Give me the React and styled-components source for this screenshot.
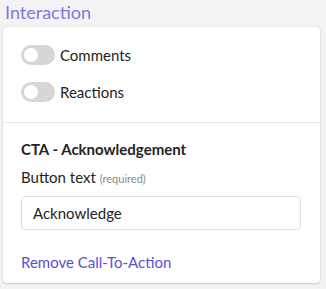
import styled, { createGlobalStyle } from "styled-components";

const Global = createGlobalStyle`
	html, body {
		margin: 0;
		background: #f3f3f3;
		font-family: "Segoe UI", "Lato", "Noto Sans", sans-serif;
		color: #242424;
	}
`;

const Page = styled.div`
	width: 326px;
	height: 289px;
	padding: 0 6px 0 3px;
	box-sizing: border-box;
`;

const Heading = styled.div`
	font-size: 18px;
	line-height: 24px;
	color: #7f7ad8;
	padding-left: 2px;
	height: 27px;
`;

const Card = styled.div`
	background: #fff;
	border-radius: 4px;
	box-shadow: 0 0 2px rgba(0, 0, 0, 0.12), 0 1px 2px rgba(0, 0, 0, 0.14);
	height: 256px;
`;

const Section = styled.div`
	padding: ${(p) => p.pad};
	display: flex;
	flex-direction: column;
	gap: ${(p) => p.gap || "0"};
	border-bottom: ${(p) => (p.divided ? "1px solid #e6e6e6" : "none")};
`;

const ToggleRow = styled.label`
	display: flex;
	align-items: center;
	gap: 5px;
	font-size: 15px;
	height: 20px;
`;

const Track = styled.span`
	width: 34px;
	height: 20px;
	border-radius: 10px;
	background: #d6d6d6;
	position: relative;
	flex-shrink: 0;
`;

const Knob = styled.span`
	position: absolute;
	left: 3px;
	top: 3px;
	width: 14px;
	height: 14px;
	border-radius: 50%;
	background: #fff;
`;

const Title = styled.div`
	font-size: 15px;
	font-weight: 700;
	line-height: 20px;
`;

const Label = styled.div`
	font-size: 15px;
	line-height: 20px;
	margin-top: 8px;
`;

const Hint = styled.span`
	font-size: 11px;
	color: #8a8a8a;
`;

const Input = styled.div`
	margin-top: 7px;
	height: 34px;
	width: 280px;
	box-sizing: border-box;
	border: 1px solid #e0e0e0;
	border-radius: 4px;
	padding: 0 11px;
	display: flex;
	align-items: center;
	font-size: 15px;
`;

const Link = styled.a`
	margin-top: 22px;
	font-size: 15px;
	line-height: 20px;
	color: #5b4fd1;
	cursor: pointer;
`;

const Toggle = ({ label }) => (
	<ToggleRow>
		<Track>
			<Knob />
		</Track>
		{label}
	</ToggleRow>
);

export default function App() {
	return (
		<>
			<Global />
			<Page>
				<Heading>Interaction</Heading>
				<Card>
					<Section pad="18px 18px 20px" gap="17px" divided>
						<Toggle label="Comments" />
						<Toggle label="Reactions" />
					</Section>
					<Section pad="16px 18px 0">
						<Title>CTA - Acknowledgement</Title>
						<Label>
							Button text <Hint>(required)</Hint>
						</Label>
						<Input>Acknowledge</Input>
						<Link>Remove Call-To-Action</Link>
					</Section>
				</Card>
			</Page>
		</>
	);
}
